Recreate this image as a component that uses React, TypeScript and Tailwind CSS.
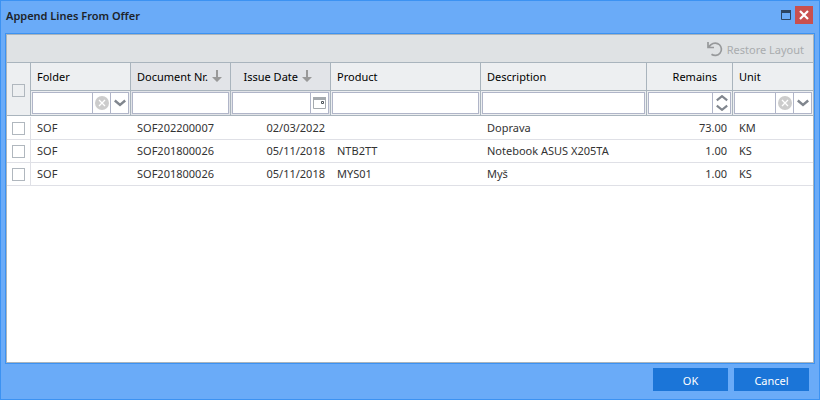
import type { ReactNode } from "react";

type Align = "left" | "right";
type Filter = "text" | "select" | "date" | "number";

type Column = {
  key: keyof Line;
  label: string;
  filter: Filter;
  width: string;
  align?: Align;
  sorted?: boolean;
};

type Line = {
  folder: string;
  document: string;
  issued: string;
  product: string;
  description: string;
  remains: string;
  unit: string;
};

const columns: Column[] = [
  { key: "folder", label: "Folder", filter: "select", width: "w-[100px]" },
  { key: "document", label: "Document Nr.", filter: "text", width: "w-[100px]", sorted: true },
  { key: "issued", label: "Issue Date", filter: "date", width: "w-[100px]", align: "right", sorted: true },
  { key: "product", label: "Product", filter: "text", width: "w-[150px]" },
  { key: "description", label: "Description", filter: "text", width: "" },
  { key: "remains", label: "Remains", filter: "number", width: "w-[86px]", align: "right" },
  { key: "unit", label: "Unit", filter: "select", width: "w-20" },
];

const lines: Line[] = [
  { folder: "SOF", document: "SOF202200007", issued: "02/03/2022", product: "", description: "Doprava", remains: "73.00", unit: "KM" },
  { folder: "SOF", document: "SOF201800026", issued: "05/11/2018", product: "NTB2TT", description: "Notebook ASUS X205TA", remains: "1.00", unit: "KS" },
  { folder: "SOF", document: "SOF201800026", issued: "05/11/2018", product: "MYS01", description: "Myš", remains: "1.00", unit: "KS" },
];

function Check({ label }: { label: string }) {
  return (
    <input
      type="checkbox"
      aria-label={label}
      className="block size-[13px] appearance-none border border-[#b0b7be] bg-transparent checked:bg-[#1b75d8]"
    />
  );
}

function SortArrow() {
  return (
    <svg width="10" height="13" viewBox="0 0 10 13" className="shrink-0" aria-hidden>
      <path d="M4 0h2v7h4l-5 5-5-5h4z" fill="#999" />
    </svg>
  );
}

function FilterButton({ label, children }: { label: string; children: ReactNode }) {
  return (
    <button
      type="button"
      aria-label={label}
      className="flex w-[18px] shrink-0 items-center justify-center border-l border-[#b0b5c8]"
    >
      {children}
    </button>
  );
}

function FilterBox({ label, kind }: { label: string; kind: Filter }) {
  return (
    <div className="m-px flex h-[22px] border border-[#b0b5c8] bg-white">
      <input type="text" aria-label={`Filter ${label}`} className="w-full min-w-0 flex-1 px-1 outline-none" />
      {kind === "select" && (
        <>
          <FilterButton label={`Clear ${label}`}>
            <svg width="14" height="14" viewBox="0 0 14 14" aria-hidden>
              <circle cx="7" cy="7" r="7" fill="#ccc" />
              <path d="M4 4l6 6M10 4l-6 6" stroke="#fff" strokeWidth="1.3" />
            </svg>
          </FilterButton>
          <FilterButton label={`Open ${label} list`}>
            <svg width="12" height="8" viewBox="0 0 12 8" aria-hidden>
              <path d="M.8 1.5L6 6l5.200-4.500" fill="none" stroke="#80868e" strokeWidth="2.400" />
            </svg>
          </FilterButton>
        </>
      )}
      {kind === "date" && (
        <FilterButton label={`Pick ${label}`}>
          <svg width="13" height="12" viewBox="0 0 13 12" aria-hidden>
            <path d="M.5.5h12v11H.5z" fill="#fff" stroke="#a5aaae" />
            <path d="M0 0h13v3H0z" fill="#a5aaae" />
            <path d="M8.500 4.500h2v2h-2z" fill="none" stroke="#50565c" />
          </svg>
        </FilterButton>
      )}
      {kind === "number" && (
        <FilterButton label={`Step ${label}`}>
          <svg width="12" height="16" viewBox="0 0 12 16" aria-hidden>
            <path
              d="M.8 5.300L6 1.200l5.200 4.100M.8 10.700L6 14.800l5.200-4.100"
              fill="none"
              stroke="#80868e"
              strokeWidth="2.200"
            />
          </svg>
        </FilterButton>
      )}
    </div>
  );
}

function LinesTable() {
  const last = columns.length - 1;
  return (
    <table className="w-full table-fixed border-separate border-spacing-0">
      <thead>
        <tr>
          <th rowSpan={2} className="w-6 border-r border-b border-[#a9b4bd] bg-[#edeff1] p-0 pt-0.5 pl-[5px]">
            <Check label="Select all lines" />
          </th>
          {columns.map((col, i) => (
            <th
              key={col.key}
              className={`h-7 border-b border-[#a9b4bd] p-0 font-normal text-black ${col.width} ${i < last ? "border-r" : ""} ${
                col.sorted ? "bg-[#e2e4e8]" : "bg-[#edeff1]"
              }`}
            >
              <div
                className={`flex items-center gap-1 pl-1.5 ${
                  col.align === "right" ? "justify-end" : ""
                } ${col.align === "right" ? (col.sorted ? "pr-[18px]" : "pr-[15px]") : ""}`}
              >
                {col.label}
                {col.sorted && <SortArrow />}
              </div>
            </th>
          ))}
        </tr>
        <tr>
          {columns.map((col, i) => (
            <td
              key={col.key}
              className={`h-[25px] border-b border-[#a9b4bd] p-0 ${i < last ? "border-r" : ""} ${
                col.sorted ? "bg-[#e2e4e8]" : "bg-[#edeff1]"
              }`}
            >
              <FilterBox label={col.label} kind={col.filter} />
            </td>
          ))}
        </tr>
      </thead>
      <tbody className="text-[#333] before:block before:h-px">
        {lines.map((line, n) => (
          <tr key={n}>
            <td className="h-[23px] border-r border-b border-[#dfe0e6] p-0 pl-[5px]">
              <Check label={`Select line ${n + 1}`} />
            </td>
            {columns.map((col) => (
              <td
                key={col.key}
                className={`truncate border-b border-[#dfe0e6] p-0 leading-4 ${
                  col.align === "right" ? "pr-1.5 text-right" : "pl-1.5"
                }`}
              >
                {line[col.key]}
              </td>
            ))}
          </tr>
        ))}
      </tbody>
    </table>
  );
}

export default function App() {
  return (
    <div
      role="dialog"
      aria-labelledby="dialog-title"
      className="flex min-h-screen flex-col border border-[#3c92f2] bg-[#6aabf8] px-1 font-['Noto_Sans',sans-serif] text-[11px] leading-4"
    >
      <header className="flex h-8 items-center justify-between pr-0.5 pb-1 pl-px">
        <h1 id="dialog-title" className="pt-0.5 font-semibold text-[#1d2329]">
          Append Lines From Offer
        </h1>
        <div className="flex items-center gap-1">
          <button type="button" aria-label="Maximize">
            <svg width="10" height="10" viewBox="0 0 10 10" aria-hidden>
              <path d="M.5.5h9v9h-9z" fill="none" stroke="#2c4563" />
              <path d="M0 0h10v3H0z" fill="#2c4563" />
            </svg>
          </button>
          <button type="button" aria-label="Close" className="flex size-[18px] items-center justify-center bg-[#c9504e]">
            <svg width="10" height="10" viewBox="0 0 10 10" aria-hidden>
              <path d="M1 1l8 8M9 1L1 9" stroke="#fff" strokeWidth="2.200" />
            </svg>
          </button>
        </div>
      </header>

      <main className="flex flex-1 flex-col border border-[#3c92f2]">
        <div className="flex flex-1 flex-col border border-[#a9b4bd] bg-white">
          <div className="flex h-7 items-center justify-end border-b border-[#a9b4bd] bg-[#dfe2e4] pt-0.5 pr-[9px]">
            <button type="button" disabled className="flex items-center gap-1 text-[#a9acae]">
              <svg width="16" height="15" viewBox="0 0 16 15" aria-hidden>
                <path
                  d="M1 0v5.500h6M1.500 5l2.500-2.300A6.200 6.200 0 1 1 4.500 12.200"
                  fill="none"
                  stroke="#97999b"
                  strokeWidth="1.700"
                />
              </svg>
              Restore Layout
            </button>
          </div>
          <LinesTable />
        </div>
      </main>

      <footer className="flex justify-end gap-1.5 pt-1 pr-1.5 pb-2 text-white">
        <button type="button" className="h-[23px] w-[75px] bg-[#1b75d8] pt-0.5">
          OK
        </button>
        <button type="button" className="h-[23px] w-[75px] bg-[#1b75d8] pt-0.5">
          Cancel
        </button>
      </footer>
    </div>
  );
}
